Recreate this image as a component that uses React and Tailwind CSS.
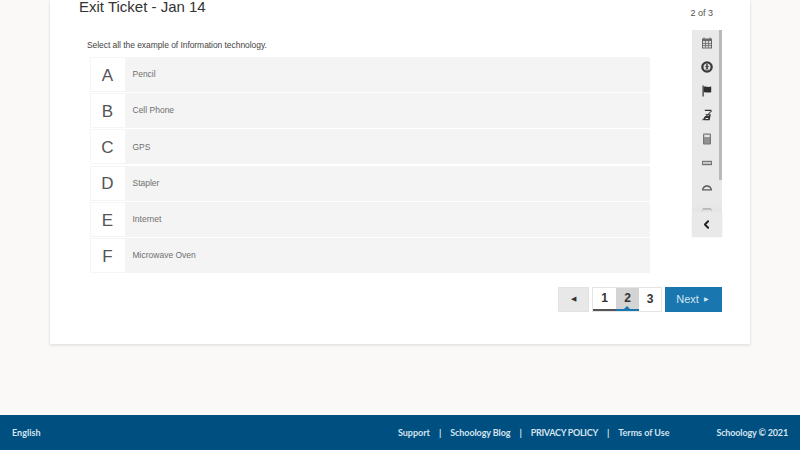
import React from 'react';
import { ChevronLeft } from 'lucide-react';

const options = [
  { letter: 'A', text: 'Pencil' },
  { letter: 'B', text: 'Cell Phone' },
  { letter: 'C', text: 'GPS' },
  { letter: 'D', text: 'Stapler' },
  { letter: 'E', text: 'Internet' },
  { letter: 'F', text: 'Microwave Oven' },
];

const footerLinks = [
  { label: 'Support', cls: '' },
  { label: 'Schoology Blog', cls: 'tracking-[-0.1px]' },
  { label: 'PRIVACY POLICY', cls: 'tracking-[-0.3px]' },
  { label: 'Terms of Use', cls: 'tracking-[-0.05px]' },
];

function ToolIcon({ children }) {
  return (
    <div className="flex h-6 w-full shrink-0 items-center justify-center">
      <svg width="14" height="14" viewBox="0 0 14 14">{children}</svg>
    </div>
  );
}

function Toolbar() {
  return (
    <div className="flex w-[30px] flex-col">
      <div className="relative h-[182px] overflow-hidden bg-[#e9e9e9] pt-[1px]">
        <div className="absolute right-0 top-0 h-[150px] w-[3px] bg-[#b9b9b9]" />
        <ToolIcon>
          <path d="M3.500 1.500h1v1h5v-1h1v1H12v10H2v-10h1.500z" fill="#6a6a6a" />
          <path d="M3 5h8v6.500H3z" fill="#d6d6d6" />
          <path d="M5 5h.8v6.500H5zM8.200 5H9v6.500h-.8zM3 7h8v.8H3zM3 9.200h8v.8H3z" fill="#6a6a6a" />
        </ToolIcon>
        <ToolIcon>
          <circle cx="7" cy="7" r="5.800" fill="#3a3a3a" />
          <circle cx="7" cy="7" r="3.500" fill="#dcdcdc" />
          <circle cx="7" cy="5" r="0.900" fill="#333" />
          <path d="M5.200 6h3.600v.8H7.700v1.200l.8 1.800h-.8L7 8.500l-.7 1.300h-.8l.8-1.800V6.800H5.200z" fill="#333" />
        </ToolIcon>
        <ToolIcon>
          <path d="M2.500 1.500h1.200v11H2.500z" fill="#333" />
          <path d="M3.700 2.800c2.200-1 4 .9 7.500-.3v5.700c-3.500 1.200-5.300-.7-7.500.3z" fill="#2e2e2e" />
        </ToolIcon>
        <ToolIcon>
          <path d="M4.500 1.800h7l-.3 1.200H5.200z" fill="#333" />
          <path d="M2 12 11.300 2.500l.7.600L2.800 12.600z" fill="#333" />
          <path d="M6 6.300h4.800l-1.100 6H4.200l-.5-.8.500-2.200 1.200-1.200h3.200l.3-1H5z" fill="#333" />
          <path d="M5.600 10h2.700l-.2 1.100H5.400z" fill="#e9e9e9" />
        </ToolIcon>
        <ToolIcon>
          <rect x="3" y="1.500" width="8" height="11" rx="1" fill="#767676" />
          <rect x="4.200" y="2.700" width="5.600" height="2.600" fill="#e2e2e2" />
          <path d="M4.200 6.500h5.600v1H4.200zM4.200 8.500h5.600v1H4.200zM4.200 10.500h5.600v.8H4.200z" fill="#b0b0b0" />
        </ToolIcon>
        <ToolIcon>
          <rect x="2" y="4.800" width="10" height="4.400" fill="#767676" />
          <rect x="3" y="6" width="8" height="1.800" fill="#cfcfcf" />
        </ToolIcon>
        <ToolIcon>
          <path d="M2 10.500C2 3.500 12 3.500 12 10.500z" fill="#5a5a5a" />
          <path d="M3.500 9.300C4 5.800 10 5.800 10.500 9.300z" fill="#e9e9e9" />
        </ToolIcon>
        <ToolIcon>
          <path d="M3 4h8v1h1v8H2V5h1z" fill="#7a7a7a" />
          <path d="M3 6h8v7H3z" fill="#d6d6d6" />
        </ToolIcon>
        <div className="absolute bottom-0 left-0 h-[8px] w-full bg-linear-to-b from-transparent to-[#e4e4e4]" />
      </div>
      <div className="flex h-[25px] items-center justify-center bg-[#e9e9e9] pr-[1px] shadow-[0_0_1px_rgba(0,0,0,0.15)]">
        <ChevronLeft size={13} strokeWidth={3.500} className="text-[#222]" />
      </div>
    </div>
  );
}

function Pagination() {
  return (
    <div className="mt-[14px] flex justify-end">
      <button className="mr-[3px] flex h-[25px] w-[31px] items-center justify-center border border-[#e2e2e2] bg-[#e8e8e8] text-[7px] text-[#333]">◀</button>
      <div className="flex h-[25px] border border-[#e4e4e4] bg-white text-[12px] font-bold text-[#333]">
        <div className="flex w-[23px] items-center justify-center border-b-2 border-[#555]">1</div>
        <div className="relative flex w-[23px] items-center justify-center border-b-2 border-[#1a76ae] bg-[#d4d4d4]">
          2
          <div className="absolute bottom-0 left-[8px] size-0 border-x-[3px] border-b-[3px] border-x-transparent border-b-[#1a76ae]" />
        </div>
        <div className="flex w-[22px] items-center justify-center">3</div>
      </div>
      <button className="ml-[3px] flex h-[25px] w-[57px] items-center justify-center gap-[5px] bg-[#1a76ae] pr-[2px] text-[11px] text-[#d3e6f2]">
        Next <span className="text-[6px]">▶</span>
      </button>
    </div>
  );
}

export default function App() {
  return (
    <div className="relative flex h-[450px] w-[800px] flex-col overflow-hidden bg-[#faf9f7] font-['Liberation_Sans',sans-serif]">
      <div className="mx-[50px] h-[344px] shrink-0 bg-white px-[28px] shadow-[0_1px_3px_rgba(0,0,0,0.14)]">
        <div className="flex h-[18px] items-start">
          <h1 className="ml-[1px] w-[500px] text-[15px] leading-[14px] text-[#333]">Exit Ticket - Jan 14</h1>
          <div className="ml-auto mr-[9px] mt-[8px] text-[9px] leading-[10px] text-[#555]">2 of 3</div>
        </div>
        <div className="flex">
          <div className="ml-[12px] w-[560px]">
            <p className="ml-[-3px] mt-[21px] text-[8.500px] leading-[12px] tracking-[-0.06px] text-[#444]">Select all the example of Information technology.</p>
            <div className="mt-[6px] flex flex-col gap-[1.200px]">
              {options.map((o) => (
                <div key={o.letter} className="flex h-[35px]">
                  <div className="flex w-[36px] shrink-0 items-center justify-center border border-[#f5f5f5] bg-white pr-[1px] pt-[2px] text-[17px] text-[#555]">{o.letter}</div>
                  <div className="flex flex-1 items-center bg-[#f4f4f4] pl-[6.500px] text-[8.500px] text-[#6f6f6f]">{o.text}</div>
                </div>
              ))}
            </div>
          </div>
          <div className="ml-auto mt-[12px]"><Toolbar /></div>
        </div>
        <Pagination />
      </div>
      <div className="mt-auto flex h-[35px] items-center bg-[#004f81] pl-[12px] pr-[12px] font-['Lato',sans-serif] text-[9px] font-bold text-[#d5e4ee]">
        <span>English</span>
        <div className="ml-auto flex items-center">
          {footerLinks.map((l, i) => (
            <React.Fragment key={l.label}>
              {i > 0 && <span className="mx-[9px]">|</span>}
              <span className={l.cls}>{l.label}</span>
            </React.Fragment>
          ))}
        </div>
        <span className="ml-[47px] tracking-[-0.15px]">Schoology © 2021</span>
      </div>
    </div>
  );
}
